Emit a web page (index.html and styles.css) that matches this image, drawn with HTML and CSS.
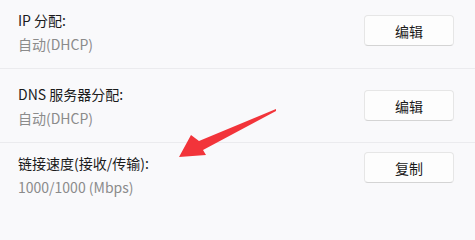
FILE: index.html
```html
<!DOCTYPE html>
<html lang="zh-CN">
<head>
<meta charset="utf-8">
<link rel="stylesheet" href="styles.css">
</head>
<body>
<div class="page">
  <div class="row row-1">
    <div class="info">
      <div class="title">IP 分配:</div>
      <div class="value">自动(DHCP)</div>
    </div>
    <button class="btn btn-1">编辑</button>
  </div>
  <div class="row row-2">
    <div class="info">
      <div class="title">DNS 服务器分配:</div>
      <div class="value">自动(DHCP)</div>
    </div>
    <button class="btn btn-2">编辑</button>
  </div>
  <div class="row row-3">
    <div class="info">
      <div class="title">链接速度(接收/传输):</div>
      <div class="value">1000/1000 (Mbps)</div>
    </div>
    <button class="btn btn-3">复制</button>
  </div>
  <svg class="arrow" width="475" height="207" viewBox="0 0 475 207">
    <polygon points="276,109 199,141 191,135 179,157 206,155 203,150 276,111" fill="#f2343a"/>
  </svg>
</div>
</body>
</html>
```
FILE: styles.css
```css
html, body {
  margin: 0;
  padding: 0;
  background: #f9f9fb;
}
.page {
  position: relative;
  width: 475px;
  height: 207px;
  overflow: hidden;
  font-family: "Noto Sans CJK SC", "Noto Sans", sans-serif;
  font-size: 14px;
}
.row {
  display: flex;
  align-items: flex-start;
  justify-content: space-between;
  padding-left: 18px;
  padding-right: 21px;
}
.row-1 {
  padding-top: 8px;
  padding-bottom: 12px;
  border-bottom: 1px solid #ebebee;
}
.row-2 {
  padding-top: 13px;
  padding-bottom: 12px;
  border-bottom: 1px solid #ebebee;
}
.row-3 {
  padding-top: 8px;
}
.title {
  line-height: 24px;
  color: #1b1b1b;
}
.value {
  line-height: 24px;
  color: #8b8b8b;
}
.btn {
  width: 90px;
  height: 31px;
  box-sizing: border-box;
  background: #fdfdfd;
  border: 1px solid #e6e6e6;
  border-bottom-color: #d4d4d4;
  border-radius: 4px;
  font-family: "Noto Sans CJK SC", sans-serif;
  font-size: 14px;
  color: #1b1b1b;
  padding: 0;
}
.btn-1 { margin-top: 7px; }
.btn-2 { margin-top: 8px; }
.btn-3 { margin-top: 1px; }
.arrow {
  position: absolute;
  left: 0;
  top: 0;
  pointer-events: none;
}
```
